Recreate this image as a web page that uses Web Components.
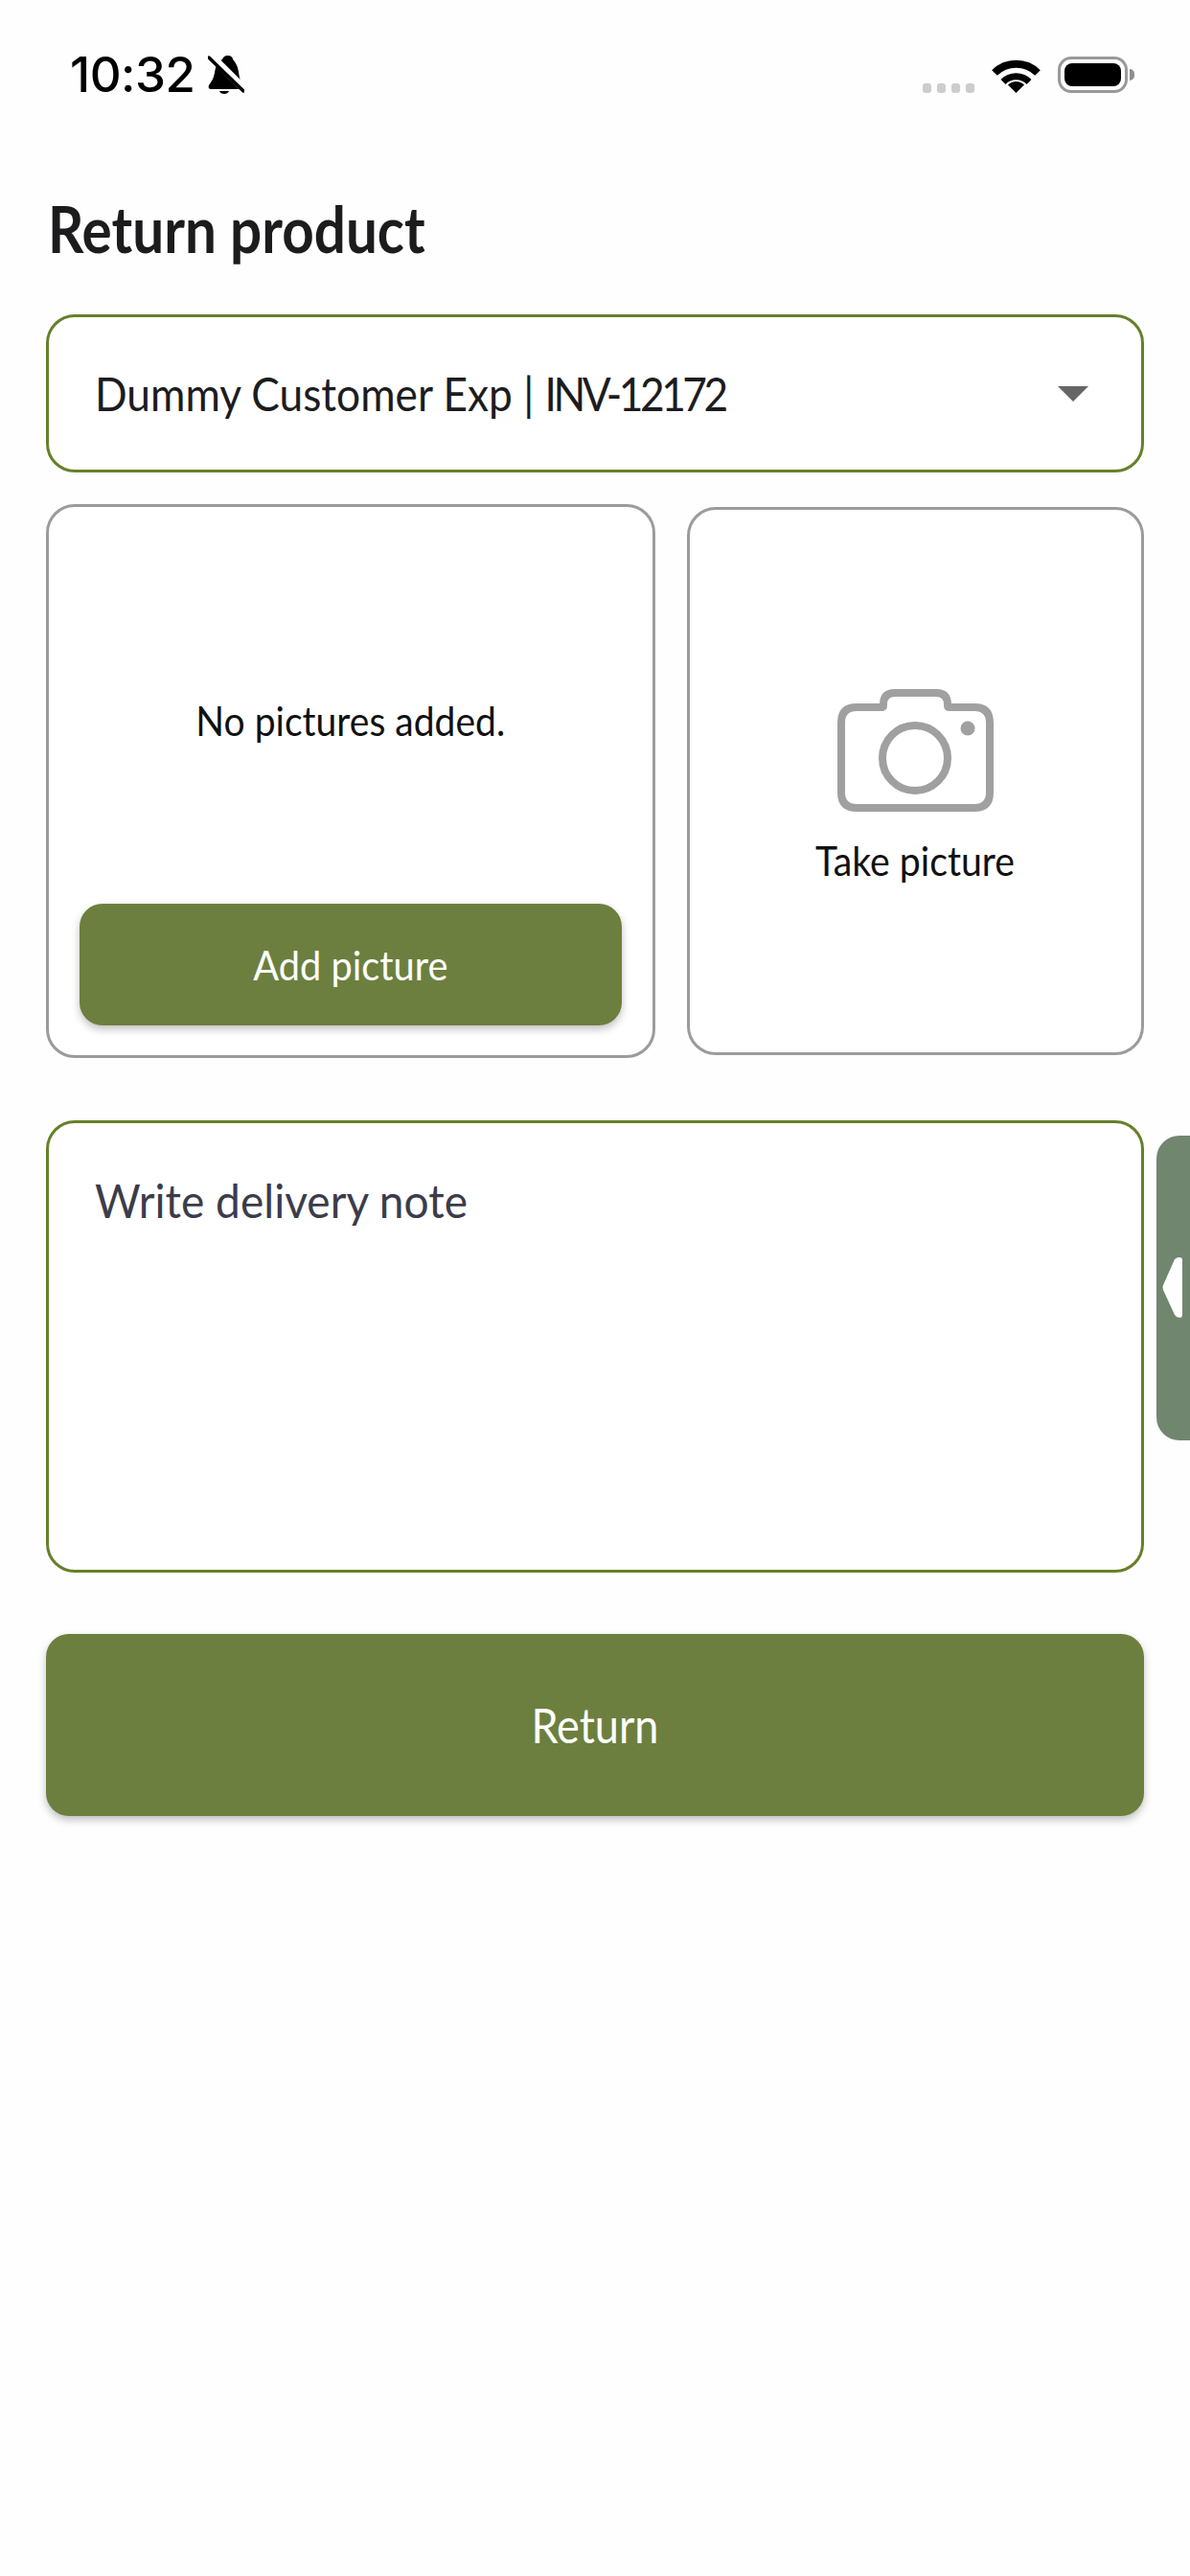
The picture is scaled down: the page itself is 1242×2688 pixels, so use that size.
<!DOCTYPE html>
<html lang="en">
<head>
<meta charset="utf-8">
<title>Return product</title>
<style>
  html, body { margin: 0; background: #fefefe; }
  body { width: 1242px; height: 2688px; overflow: hidden; position: relative; font-family: Lato, "Open Sans", sans-serif; color: #1c1c1e; }
  main { display: flex; flex-direction: column; padding: 0 48px; }
</style>
</head>
<body>
<status-bar></status-bar>
<main>
  <page-title>Return product</page-title>
  <select-field>Dummy Customer Exp | <span style="letter-spacing:-3.8px">INV-12172</span></select-field>
  <picture-row>
    <picture-card>No pictures added.</picture-card>
    <camera-card>Take picture</camera-card>
  </picture-row>
  <note-field>Write delivery note</note-field>
  <primary-button>Return</primary-button>
</main>
<side-handle></side-handle>

<script>
  // small helper, every element just has a static shadow root
  function register(name, html) {
    customElements.define(name, class extends HTMLElement {
      connectedCallback() {
        this.attachShadow({ mode: 'open' });
        this.shadowRoot.innerHTML = html;
      }
    });
  }

  const narrow = `
    .t { display: inline-block; white-space: nowrap; transform: scaleX(var(--sx, .87)); }
  `;

  register('status-bar', `
    <style>
      :host { display: flex; height: 120px; box-sizing: border-box; padding: 58px 0 0 73px; position: relative; }
      .time { font: 500 51px/40px Inter, Roboto, sans-serif; color: #000; letter-spacing: -.5px; height: 40px; width: 131px; white-space: nowrap; }
      .bell { margin-left: 13px; width: 38px; height: 41px; }
      .right { margin-left: auto; margin-right: 58px; display: flex; align-items: flex-start; }
      .dots { display: flex; gap: 6px; margin-top: 29px; }
      .dots i { width: 9px; height: 10px; border-radius: 3px; background: #cdcdcd; }
      .wifi { width: 51px; height: 39px; margin-left: 18px; }
      .battery { width: 73px; height: 38px; margin-left: 18px; box-sizing: border-box; border: 3px solid #999; border-radius: 14px; padding: 4px; margin-top: 1px; }
      .battery div { height: 100%; background: #000; border-radius: 8px; }
      .cap { width: 5px; height: 12px; margin: 14px 0 0 2px; background: #8e8e8e; border-radius: 0 5px 5px 0; }
    </style>
    <div class="time">10:32</div>
    <svg class="bell" viewBox="0 0 38 41">
      <path d="M21 0C17 0 16 2 15 4C10 6 8 11 7 18C6 24 3 28 1 31C0 33 1 35 3 35H36C38 35 38 33 37 31C34 28 33 24 32 17C31 10 28 6 26 4C26 2 24 0 21 0Z"/>
      <path d="M12 37H22C21 41 13 41 12 37Z"/>
      <path d="M3 0L40 37" stroke="#fff" stroke-width="8"/>
      <path d="M1 2L37 37" stroke="#000" stroke-width="3.5" stroke-linecap="round"/>
    </svg>
    <div class="right">
      <div class="dots"><i></i><i></i><i></i><i></i></div>
      <svg class="wifi" viewBox="0 0 51 39" fill="none" stroke="#000">
        <path d="M3 18A32 32 0 0 1 48 18" stroke-width="8"/>
        <path d="M12 27.500A19 19 0 0 1 39 27.500" stroke-width="7"/>
        <path d="M25.500 39L17 30.500A12 12 0 0 1 34 30.500Z" fill="#000" stroke="none"/>
      </svg>
      <div class="battery"><div></div></div>
      <div class="cap"></div>
    </div>
  `);

  register('page-title', `
    <style>
      ${narrow}
      :host { display: block; height: 208px; box-sizing: border-box; padding-top: 79px; font: 700 66px/80px Lato, sans-serif; color: #1c1c1e; margin-left: 2px; }
      .t { transform-origin: left center; --sx: .885; }
    </style>
    <span class="t"><slot></slot></span>
  `);

  register('select-field', `
    <style>
      ${narrow}
      :host { display: flex; align-items: center; height: 165px; box-sizing: border-box; border: 3px solid #66802a; border-radius: 30px; padding: 0 55px 0 48px; font: 400 48px/58px Lato, sans-serif; background: #fff; }
      .t { transform-origin: left center; flex: 1; --sx: .922; }
      i { width: 0; height: 0; border: 16px solid transparent; border-top: 16px solid #666; border-bottom: 0; }
    </style>
    <span class="t"><slot></slot></span><i></i>
  `);

  register('picture-row', `
    <style>
      :host { display: grid; grid-template-columns: 636px 477px; column-gap: 33px; align-items: center; margin-top: 33px; }
    </style>
    <slot></slot>
  `);

  register('picture-card', `
    <style>
      ${narrow}
      :host { display: flex; flex-direction: column; height: 578px; box-sizing: border-box; border: 3px solid #9b9b9b; border-radius: 30px; padding: 0 32px 31px; font: 400 43px/52px Lato, sans-serif; background: #fff; }
      .msg { flex: 1; display: flex; align-items: center; justify-content: center; padding-top: 32px; color: #111; }
      .msg .t { --sx: .908; }
      .btn { height: 127px; border-radius: 24px; background: #6c7f3e; color: #fff; display: flex; align-items: center; justify-content: center; box-shadow: 0 4px 8px rgba(0,0,0,.25); }
      .btn .t { --sx: .925; }
    </style>
    <div class="msg"><span class="t"><slot></slot></span></div>
    <div class="btn"><span class="t">Add picture</span></div>
  `);

  register('camera-card', `
    <style>
      ${narrow}
      :host { display: flex; flex-direction: column; align-items: center; height: 572px; box-sizing: border-box; border: 3px solid #9b9b9b; border-radius: 30px; padding-top: 187px; font: 400 43px/52px Lato, sans-serif; background: #fff; color: #111; }
      svg { width: 163px; height: 128px; display: block; }
      .t { margin-top: 25px; --sx: .912; }
    </style>
    <svg viewBox="0 0 163 128" fill="none" stroke="#a0a0a0" stroke-width="8" stroke-linejoin="round">
      <path d="M20 19H46Q48 19 48 17V16Q48 4 60 4H103Q115 4 115 16V17Q115 19 117 19H143Q159 19 159 35V108Q159 124 143 124H20Q4 124 4 108V35Q4 19 20 19Z"/>
      <circle cx="81" cy="72" r="34"/>
      <circle cx="136" cy="41" r="7.500" fill="#a0a0a0" stroke="none"/>
    </svg>
    <span class="t"><slot></slot></span>
  `);

  register('note-field', `
    <style>
      ${narrow}
      :host { display: block; height: 472px; margin-top: 65px; box-sizing: border-box; border: 3px solid #66802a; border-radius: 30px; padding: 52px 48px 0; font: 400 48px/58px Lato, sans-serif; color: #3c3c4a; background: #fff; }
      .t { transform-origin: left center; --sx: .96; }
    </style>
    <span class="t"><slot></slot></span>
  `);

  register('primary-button', `
    <style>
      ${narrow}
      :host { display: flex; align-items: center; justify-content: center; height: 190px; margin-top: 64px; border-radius: 24px; background: #6c7f3e; color: #fff; font: 400 50px/60px Lato, sans-serif; box-shadow: 0 4px 8px rgba(0,0,0,.25); }
      .t { --sx: .90; }
    </style>
    <span class="t"><slot></slot></span>
  `);

  // floating drawer tab on the right edge
  register('side-handle', `
    <style>
      :host { position: absolute; left: 1207px; top: 1185px; width: 35px; height: 318px; background: #71866f; border-radius: 24px 0 0 24px; }
      svg { position: absolute; left: 6px; top: 127px; width: 21px; height: 63px; }
    </style>
    <svg viewBox="0 0 21 63"><path d="M13 2Q15 0 18 0Q21 0 21 3V60Q21 63 18 63Q15 63 13 60L1 34Q0 31 1 29Z" fill="#fff"/></svg>
  `);
</script>
</body>
</html>
